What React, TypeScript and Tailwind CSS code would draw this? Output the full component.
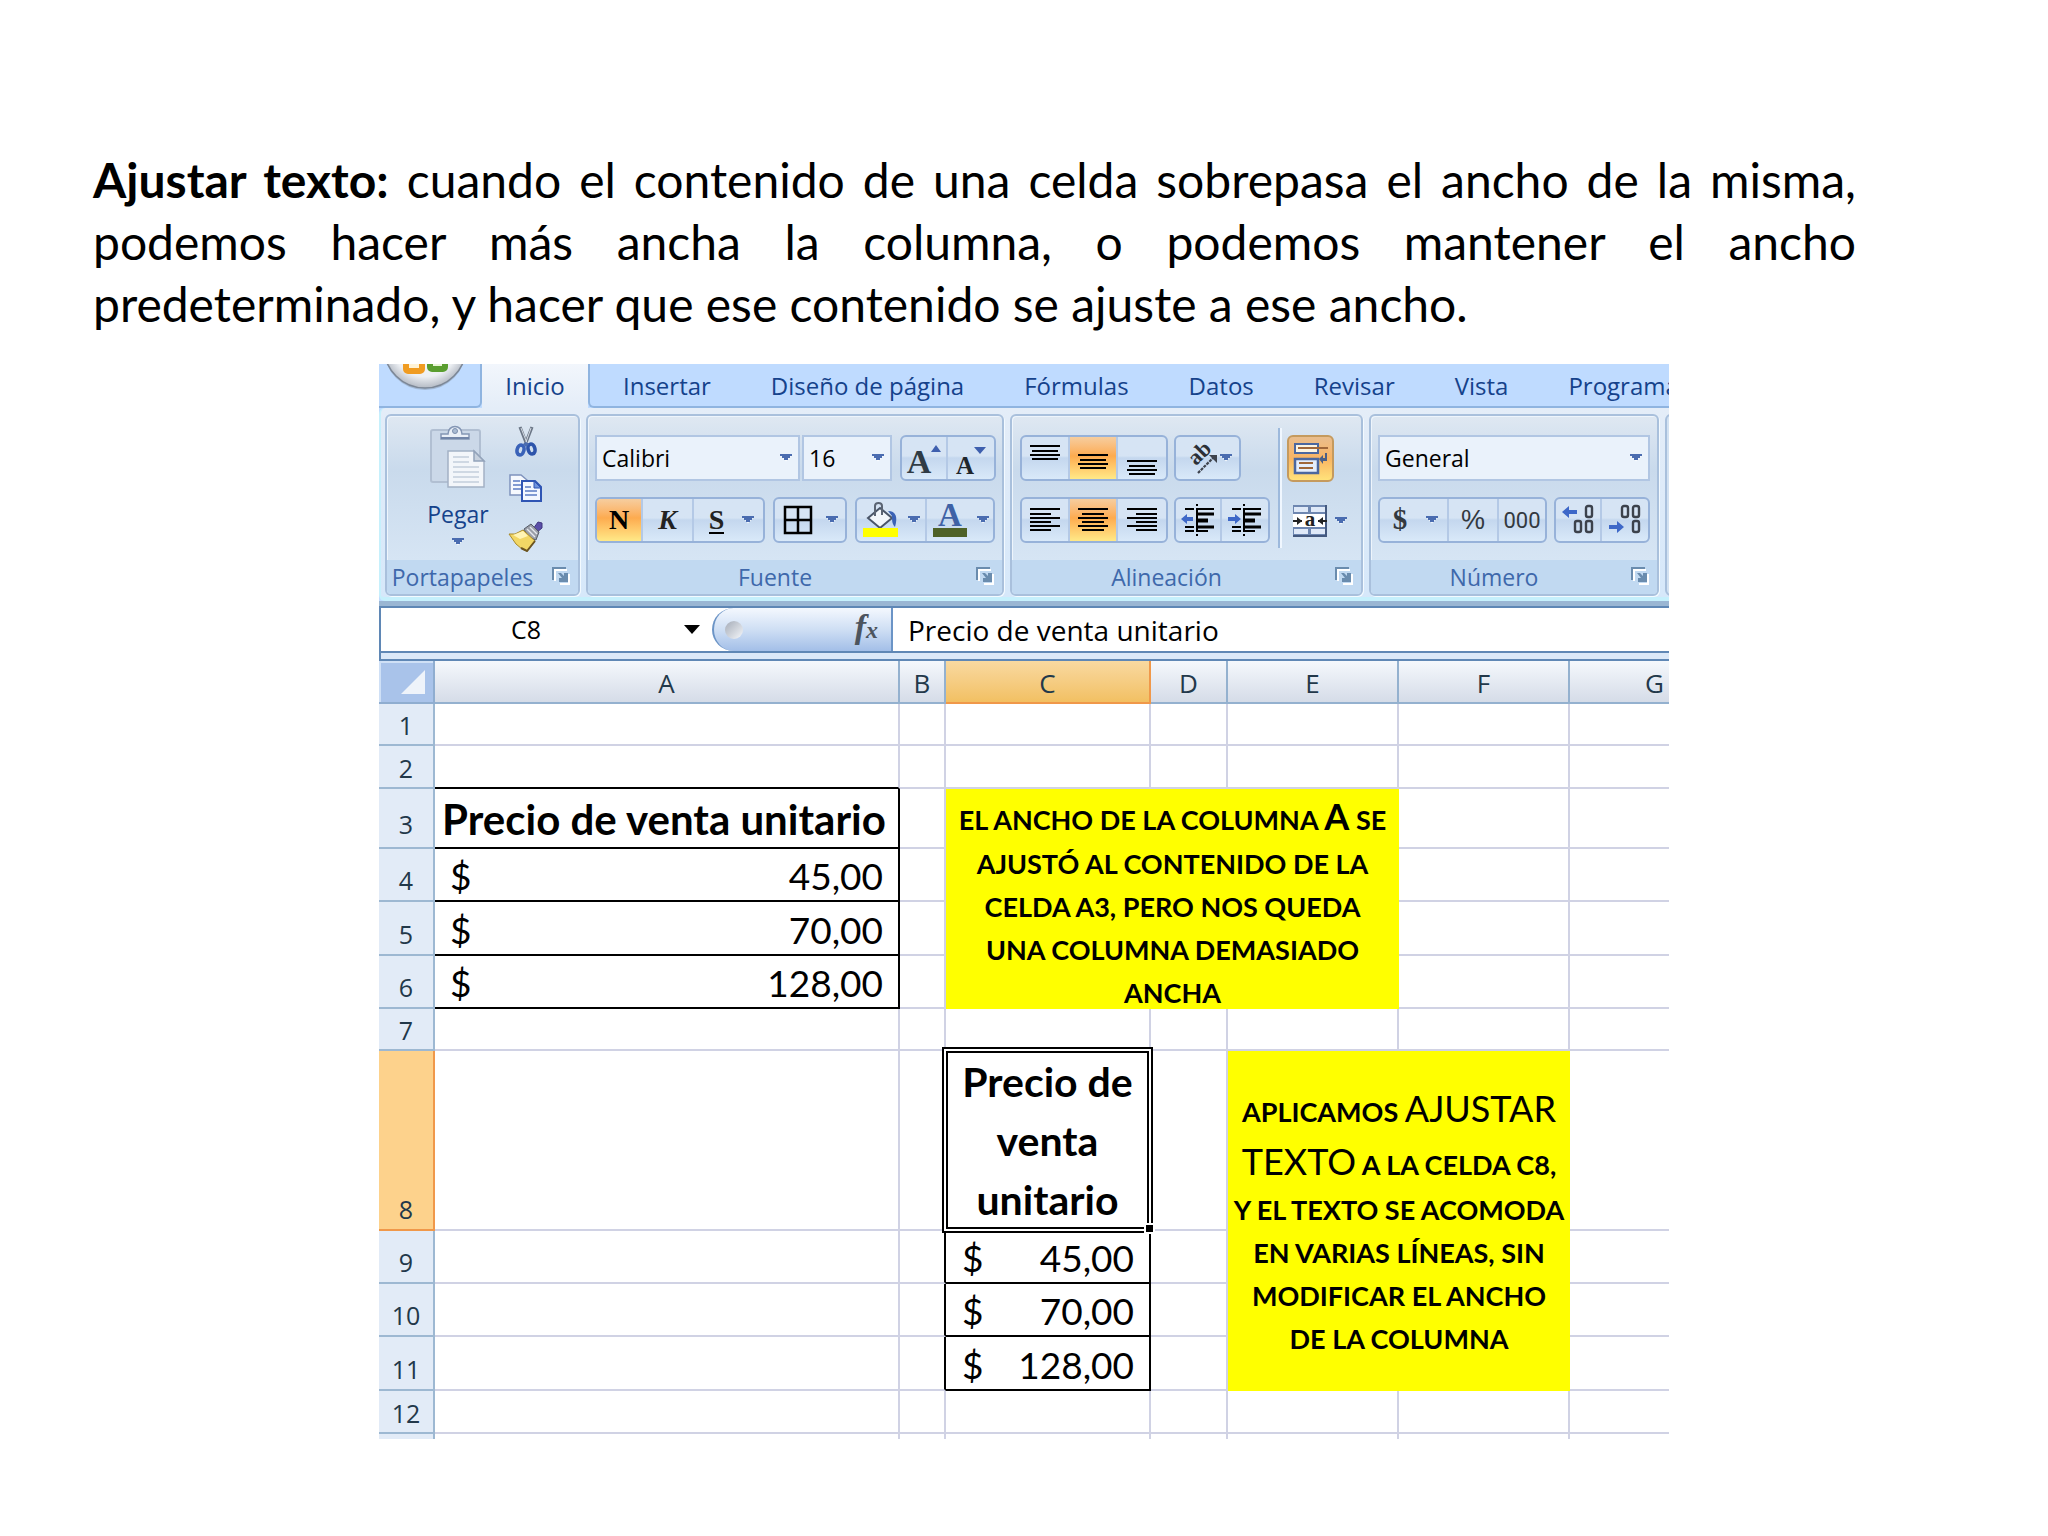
import type { ReactNode } from "react";

const UI = "font-['Open_Sans','Noto_Sans',sans-serif]";
const CALC = "font-['Lato','Open_Sans',sans-serif]";

function Caret({ className = "" }: { className?: string }) {
  return (
    <svg className={className} width="12" height="8" viewBox="0 0 12 8" aria-hidden="true">
      <path d="M1 2.2h10L6 7.6z" fill="#fff" opacity=".8" />
      <path d="M0 0h12v2h-2v2H8v2H4V4H2V2H0z" fill="#4a6cb0" />
    </svg>
  );
}

function Launcher({ label }: { label: string }) {
  return (
    <button type="button" aria-label={label} className="absolute right-2 top-[7px]">
      <svg width="18" height="18" viewBox="0 0 18 18" aria-hidden="true">
        <path d="M3 14V3h12" fill="none" stroke="#fff" strokeWidth="2" />
        <path d="M1 13V1h13" fill="none" stroke="#6a8cae" strokeWidth="2" />
        <path d="M8 17h9V7" fill="none" stroke="#fff" strokeWidth="2" />
        <path d="M6 6l3 0 3 3V6h4v9H7v-4h3z" fill="#6a8cae" />
      </svg>
    </button>
  );
}

function Group({ label, width, children }: { label: string; width: string; children: ReactNode }) {
  return (
    <section
      aria-label={label}
      className={`relative flex h-[182px] shrink-0 flex-col overflow-hidden rounded-md border-2 border-[#a9c0dc] bg-linear-to-b from-[#dfe8f2] from-0% via-[#c9daec] via-30% to-[#dbe9f7] shadow-[1px_1px_0_#f3faff,inset_1px_1px_0_#eef5fc] ${width}`}
    >
      <div className="flex-1">{children}</div>
      <div className="relative h-[34px] bg-[#c1d9f1] pr-10 text-center text-[23px] leading-[35px] text-[#3e68ab]">
        {label}
        <Launcher label={`Opciones de ${label}`} />
      </div>
    </section>
  );
}

function Bar({ children }: { children: ReactNode }) {
  return (
    <div className="flex h-[46px] divide-x-2 divide-[#b4c9e6] overflow-hidden rounded-md border-2 border-[#97b2d9] bg-linear-to-b from-[#d6e4f4] from-45% via-[#c4d7ee] via-50% to-[#d9e9f9]">
      {children}
    </div>
  );
}

function Btn({ label, w, active = false, children }: { label: string; w: string; active?: boolean; children: ReactNode }) {
  return (
    <button
      type="button"
      aria-label={label}
      aria-pressed={active}
      className={`flex h-full shrink-0 items-center justify-center ${w} ${
        active ? "bg-linear-to-b from-[#f6cd9e] from-0% via-[#fdab4f] via-45% to-[#ffe987]" : ""
      }`}
    >
      {children}
    </button>
  );
}

function Combo({ label, value, w }: { label: string; value: string; w: string }) {
  return (
    <div className={`relative h-[46px] ${w}`}>
      <select
        aria-label={label}
        defaultValue={value}
        className="h-full w-full appearance-none border-2 border-[#b1c6e3] bg-[#eaf2fb] pl-[5px] text-[23px] leading-[40px] text-black"
      >
        <option>{value}</option>
      </select>
      <Caret className="pointer-events-none absolute right-2 top-[19px]" />
    </div>
  );
}

function Lines({ rows }: { rows: [number, number, number][] }) {
  return (
    <svg width="32" height="36" viewBox="0 0 32 36" aria-hidden="true">
      {rows.map(([x, y, w]) => (
        <rect key={y} x={x} y={y} width={w} height="2" fill="#000" />
      ))}
    </svg>
  );
}

const short = (y: number): [number, number, number][] => [
  [1, y, 30],
  [3, y + 5, 26],
  [1, y + 9, 30],
  [3, y + 13, 26],
];

function ScissorsIcon() {
  return (
    <svg width="22" height="32" viewBox="0 0 22 32" aria-hidden="true">
      <path d="M5 1l7 18M17 1l-7 18" stroke="#6c7787" strokeWidth="3.2" />
      <path d="M6 2l6 15M16 2l-5 14" stroke="#d5dbe3" strokeWidth="1" />
      <ellipse cx="5.500" cy="24" rx="3.400" ry="5" fill="none" stroke="#3a62b8" strokeWidth="3.600" transform="rotate(15 5.500 24)" />
      <ellipse cx="16.500" cy="23" rx="3.400" ry="5" fill="none" stroke="#2d54ab" strokeWidth="3.600" transform="rotate(-15 16.500 23)" />
      <path d="M8 18l3-2 3 2-3 3z" fill="#4a6cb0" />
    </svg>
  );
}

function CopyIcon() {
  return (
    <svg width="34" height="30" viewBox="0 0 34 30" aria-hidden="true">
      <path d="M1 1h11l6 5v15H1z" fill="#f6f9fe" stroke="#7f93bd" strokeWidth="1.500" />
      <path d="M4 7h7M4 11h9M4 15h9" stroke="#5c7cc4" strokeWidth="1.600" />
      <path d="M13 7h13l6 6v14H13z" fill="#f3f7ff" stroke="#2f55b4" strokeWidth="2" />
      <path d="M25 7v7h7z" fill="#6f93dc" stroke="#2f55b4" strokeWidth="1" />
      <path d="M16 13h6M16 17h12M16 21h12" stroke="#5c7cc4" strokeWidth="1.700" />
    </svg>
  );
}

function BrushIcon() {
  return (
    <svg width="36" height="32" viewBox="0 0 36 32" aria-hidden="true">
      <path d="M25 9l5-7 4 1 0 5-6 5z" fill="#5b4fa8" stroke="#41377e" strokeWidth="1" />
      <path d="M16 9l7-5 8 8-3 8-8-3z" fill="#9a9ea8" stroke="#555b66" strokeWidth="1" />
      <path d="M19 9l8 8M22 7l7 7" stroke="#e5e8ee" strokeWidth="1.400" />
      <path d="M1 14l6 0 8-4 12 11-8 10-5-2-6-5z" fill="#f2d765" stroke="#a98a2a" strokeWidth="1" />
      <path d="M5 15l10-4 5 5-8 3z" fill="#fff4b4" />
      <path d="M13 28l6 3 8-10" fill="none" stroke="#6b5420" strokeWidth="2" />
    </svg>
  );
}

function PasteIcon() {
  return (
    <svg width="58" height="64" viewBox="0 0 58 64" aria-hidden="true">
      <rect x="2" y="5" width="49" height="52" rx="2" fill="#cbd8e8" stroke="#b1bfd2" strokeWidth="2" />
      <path d="M12 14v-5h7c0-10 14-10 14 0h7v5z" fill="#e9eff7" stroke="#8496b4" strokeWidth="1.500" />
      <circle cx="26" cy="6" r="2.500" fill="#a9bbd3" stroke="#7c8fae" />
      <path d="M12 13h28" stroke="#7185a8" strokeWidth="2" />
      <path d="M19 26h26l10 10v26H19z" fill="#f3f6fa" stroke="#a3b1c5" strokeWidth="1.500" />
      <path d="M45 26v10h10z" fill="#c7d1de" stroke="#93a3ba" strokeWidth="1.500" />
      <path d="M24 32h16M24 37h16M24 42h26M24 47h26M24 52h26M24 57h26" stroke="#c3cedc" strokeWidth="1.500" />
    </svg>
  );
}

function OrientationIcon() {
  return (
    <svg width="36" height="36" viewBox="0 0 36 36" aria-hidden="true">
      <text x="7" y="26" fontFamily="Liberation Serif" fontWeight="700" fontSize="22" fill="#2c3036" transform="rotate(-45 10 20)">
        ab
      </text>
      <path d="M14 33L31 16" fill="none" stroke="#3e434c" strokeWidth="2.200" strokeDasharray="3 1" />
      <path d="M25 15h8v8z" fill="#3e434c" />
    </svg>
  );
}

function IndentIcon({ back }: { back: boolean }) {
  return (
    <svg width="36" height="34" viewBox="0 0 36 34" aria-hidden="true">
      <path d="M5 6h9M5 24h9M5 28h9M16 6h18" stroke="#000" strokeWidth="2.200" />
      <path d="M16 11h18M16 24h18" stroke="#000" strokeWidth="3" />
      <path d="M16 28h12" stroke="#000" strokeWidth="2" />
      <path d="M16 17.500h12" stroke="#000" strokeWidth="4" />
      <path d="M17 1v2M17 31v2M17 5v24" stroke="#000" strokeWidth="2" />
      {back ? (
        <path d="M1 16l6-5v3h6v4H7v3z" fill="#3e68c8" />
      ) : (
        <path d="M14 16l-6-5v3H1v4h7v3z" fill="#3e68c8" />
      )}
    </svg>
  );
}

function WrapIcon() {
  return (
    <svg width="36" height="34" viewBox="0 0 36 34" aria-hidden="true">
      <rect x="2" y="2" width="23" height="9" fill="#fdf4e0" stroke="#4b679f" strokeWidth="2" />
      <path d="M5 6h30" stroke="#a0673a" strokeWidth="2" />
      <rect x="2" y="17" width="23" height="14" fill="#e5eefc" stroke="#4b679f" strokeWidth="2.500" />
      <path d="M6 21h14M6 26h14" stroke="#a0673a" strokeWidth="2" />
      <path d="M34 11v8h-4v3l-4-5 4-4v3h2v-5z" fill="#4b5f86" />
    </svg>
  );
}

function MergeIcon() {
  return (
    <svg width="34" height="32" viewBox="0 0 34 32" aria-hidden="true">
      <rect width="34" height="32" fill="#6d86b0" />
      <path d="M1 2h14v5H1zM18 2h14v5H18zM1 24h14v5H1zM18 24h14v5H18z" fill="#dfe9f8" />
      <rect x="0" y="9" width="33" height="13" fill="#fff" />
      <path d="M33 0v32M0 31h34" stroke="#44597f" strokeWidth="2" />
      <text x="17" y="21" textAnchor="middle" fontFamily="Liberation Serif" fontWeight="700" fontSize="21" fill="#222">
        a
      </text>
      <path d="M0 16h9M25 16h9" stroke="#222" strokeWidth="2" />
      <path d="M4 12l5 4-5 4zM30 12l-5 4 5 4z" fill="#222" />
    </svg>
  );
}

function FillIcon() {
  return (
    <svg width="38" height="36" viewBox="0 0 38 36" aria-hidden="true">
      <path d="M6 16L18 6l12 10-12 10z" fill="#f2f6fb" stroke="#4a5568" strokeWidth="2" />
      <path d="M13 14V4c0-4 7-4 7 0v9" fill="none" stroke="#5b6473" strokeWidth="2" />
      <path d="M26 9c8 0 10 6 7 16-3-3-3-7-3-11z" fill="#3b62b4" />
      <rect x="1" y="26" width="35" height="9" fill="#ffff00" />
    </svg>
  );
}

function FontColorIcon() {
  return (
    <svg width="36" height="36" viewBox="0 0 36 36" aria-hidden="true">
      <text x="18" y="24" textAnchor="middle" fontFamily="Liberation Serif" fontWeight="700" fontSize="33" fill="#3f62a6">
        A
      </text>
      <rect x="1" y="26" width="34" height="9" fill="#4f6228" />
    </svg>
  );
}

function DecimalIcon({ more }: { more: boolean }) {
  return (
    <svg width="36" height="32" viewBox="0 0 36 32" aria-hidden="true">
      <g fill="none" stroke="#3c424c" strokeWidth="2.400">
        <rect x="26" y="2" width="6" height="11" rx="2" />
        <rect x="26" y="17" width="6" height="11" rx="2" />
        {more ? <rect x="15" y="17" width="6" height="11" rx="2" /> : <rect x="15" y="2" width="6" height="11" rx="2" />}
      </g>
      {more ? (
        <path d="M2 8l7-6v4h8v4H9v4z" fill="#3e68c8" />
      ) : (
        <path d="M17 23l-7-6v4H2v4h8v4z" fill="#3e68c8" />
      )}
    </svg>
  );
}

function OfficeButton() {
  return (
    <button type="button" aria-label="Botón de Office" className="h-[44px] w-[103px] shrink-0 rounded-br-md border-b-2 border-r-2 border-[#8fb4e0] bg-[#bfdbff]">
      <svg width="95" height="42" viewBox="0 0 95 42" aria-hidden="true">
        <defs>
          <radialGradient id="orb" cx=".5" cy=".45" r=".55">
            <stop offset="0" stopColor="#ffffff" />
            <stop offset=".75" stopColor="#eceff3" />
            <stop offset="1" stopColor="#b4bac4" />
          </radialGradient>
        </defs>
        <circle cx="46" cy="-15" r="41" fill="#8797ac" opacity=".5" />
        <circle cx="46" cy="-17" r="41" fill="url(#orb)" stroke="#7c8796" strokeWidth="1.500" />
        <rect x="27" y="-9" width="16" height="16" rx="2" fill="#fff3d6" stroke="#f09c22" strokeWidth="6" />
        <rect x="51" y="-11" width="15" height="16" rx="2" fill="#e9f5d6" stroke="#5a9e2f" strokeWidth="6" />
      </svg>
    </button>
  );
}

const tabs = ["Insertar", "Diseño de página", "Fórmulas", "Datos", "Revisar", "Vista", "Programador"];

function Ribbon() {
  return (
    <div className={`${UI} bg-[#bfdbff]`}>
      <div role="tablist" className="flex h-[44px] text-[24px] leading-[40px] text-[#15428b]">
        <OfficeButton />
        <button
          type="button"
          role="tab"
          aria-selected="true"
          className="w-[106px] shrink-0 bg-linear-to-b from-[#f2f6fc] to-[#e4edf8]"
        >
          Inicio
        </button>
        <div className="flex flex-1 overflow-hidden rounded-bl-md border-b-2 border-l-2 border-[#8fb4e0]">
          {tabs.map((t) => (
            <button key={t} type="button" role="tab" aria-selected="false" className="shrink-0 px-[30px] pt-[2px] first:pl-[33px]">
              {t}
            </button>
          ))}
        </div>
      </div>

      <div className="flex h-[193px] gap-[6px] overflow-hidden rounded-l-md border-b-4 border-l-2 border-[#c6f0fc] bg-linear-to-b from-[#e4edf8] to-[#d6e8fa] pl-[4px] pt-[6px]">
        <Group label="Portapapeles" width="w-[195px]">
          <div className="flex h-full pl-[31px] pt-[9px]">
            <button type="button" className="flex w-[80px] flex-col items-center text-[23px] leading-[30px] text-[#15428b]">
              <PasteIcon />
              <span className="mt-[10px]">Pegar</span>
              <Caret className="mt-[9px]" />
            </button>
            <div className="ml-[10px] flex flex-col items-center gap-[16px] pt-px">
              <button type="button" aria-label="Cortar"><ScissorsIcon /></button>
              <button type="button" aria-label="Copiar"><CopyIcon /></button>
              <button type="button" aria-label="Copiar formato"><BrushIcon /></button>
            </div>
          </div>
        </Group>

        <Group label="Fuente" width="w-[418px]">
          <div className="flex flex-col gap-[16px] pl-[7px] pt-[19px]">
            <div className="flex">
              <Combo label="Fuente" value="Calibri" w="w-[205px]" />
              <Combo label="Tamaño de fuente" value="16" w="ml-[2px] w-[90px]" />
              <div className="ml-[8px]">
                <Bar>
                  <Btn label="Aumentar tamaño" w="w-[46px]">
                    <span className="pt-2 font-['Liberation_Serif',serif] text-[34px] font-bold leading-[36px] text-[#2f3b45]">A</span>
                    <svg className="mb-5" width="10" height="7" aria-hidden="true"><path d="M0 7h10L5 0z" fill="#3e5fae" /></svg>
                  </Btn>
                  <Btn label="Disminuir tamaño" w="w-[46px]">
                    <span className="pt-4 font-['Liberation_Serif',serif] text-[25px] font-bold leading-[26px] text-[#1f262c]">A</span>
                    <svg className="mb-4" width="12" height="7" aria-hidden="true"><path d="M0 0h12L6 7z" fill="#3e5fae" /></svg>
                  </Btn>
                </Bar>
              </div>
            </div>
            <div className="flex gap-[8px]">
              <Bar>
                <Btn label="Negrita" w="w-[46px]" active>
                  <span className="font-['Liberation_Serif',serif] text-[28px] font-bold">N</span>
                </Btn>
                <Btn label="Cursiva" w="w-[51px]">
                  <span className="font-['Liberation_Serif',serif] text-[28px] font-bold italic text-[#222]">K</span>
                </Btn>
                <Btn label="Subrayado" w="w-[69px]">
                  <span className="ml-[6px] mr-[18px] border-b-2 border-black font-['Liberation_Serif',serif] text-[28px] font-bold leading-[25px] text-[#222]">S</span>
                  <Caret />
                </Btn>
              </Bar>
              <Bar>
                <Btn label="Bordes" w="w-[70px]">
                  <svg className="mr-[13px]" width="30" height="30" viewBox="0 0 30 30" aria-hidden="true">
                    <path d="M2 2h26v26H2zM15 2v26M2 15h26" fill="none" stroke="#000" strokeWidth="2.500" />
                  </svg>
                  <Caret />
                </Btn>
              </Bar>
              <Bar>
                <Btn label="Color de relleno" w="w-[70px]">
                  <span className="mr-[8px]"><FillIcon /></span>
                  <Caret />
                </Btn>
                <Btn label="Color de fuente" w="w-[66px]">
                  <span className="mr-[9px]"><FontColorIcon /></span>
                  <Caret />
                </Btn>
              </Bar>
            </div>
          </div>
        </Group>

        <Group label="Alineación" width="w-[353px]">
          <div className="flex pl-[8px] pt-[19px]">
            <div className="flex flex-col gap-[16px]">
              <div className="flex gap-[6px]">
                <Bar>
                  <Btn label="Alinear arriba" w="w-[48px]"><Lines rows={short(5)} /></Btn>
                  <Btn label="Alinear al medio" w="w-[48px]" active><Lines rows={short(14)} /></Btn>
                  <Btn label="Alinear abajo" w="w-[48px]"><Lines rows={short(20)} /></Btn>
                </Bar>
                <Bar>
                  <Btn label="Orientación" w="w-[63px]"><OrientationIcon /><Caret /></Btn>
                </Bar>
              </div>
              <div className="flex gap-[6px]">
                <Bar>
                  <Btn label="Alinear a la izquierda" w="w-[48px]">
                    <Lines rows={[[1, 6, 30], [1, 11, 21], [1, 15, 30], [1, 19, 21], [1, 23, 30], [1, 27, 21]]} />
                  </Btn>
                  <Btn label="Centrar" w="w-[48px]" active>
                    <Lines rows={[[1, 6, 30], [5, 11, 22], [1, 15, 30], [5, 19, 22], [1, 23, 30], [5, 27, 22]]} />
                  </Btn>
                  <Btn label="Alinear a la derecha" w="w-[48px]">
                    <Lines rows={[[1, 6, 30], [10, 11, 21], [1, 15, 30], [10, 19, 21], [1, 23, 30], [10, 27, 21]]} />
                  </Btn>
                </Bar>
                <Bar>
                  <Btn label="Disminuir sangría" w="w-[46px]"><IndentIcon back /></Btn>
                  <Btn label="Aumentar sangría" w="w-[46px]"><IndentIcon back={false} /></Btn>
                </Bar>
              </div>
            </div>
            <div className="-mt-[7px] ml-[8px] h-[120px] w-[4px] border-l-2 border-r-2 border-l-[#9db9dc] border-r-[#f0f7ff]" />
            <div className="ml-[5px] flex flex-col gap-[16px]">
              <button
                type="button"
                aria-label="Ajustar texto"
                aria-pressed="true"
                className="flex h-[47px] w-[47px] items-center justify-center rounded-md border-2 border-[#c59a5e] bg-linear-to-b from-[#e9bd8d] via-[#f9b563] to-[#ffe27a]"
              >
                <WrapIcon />
              </button>
              <button type="button" aria-label="Combinar y centrar" className="flex h-[46px] w-[61px] items-center pl-[6px]">
                <MergeIcon />
                <Caret className="ml-[8px]" />
              </button>
            </div>
          </div>
        </Group>

        <Group label="Número" width="w-[290px]">
          <div className="flex flex-col gap-[16px] pl-[7px] pt-[19px]">
            <Combo label="Formato de número" value="General" w="w-[272px]" />
            <div className="flex gap-[7px] text-[#33393f]">
              <Bar>
                <Btn label="Moneda" w="w-[69px]">
                  <span className="mr-[19px] pl-[4px] font-['Liberation_Serif',serif] text-[29px] font-bold">$</span>
                  <Caret />
                </Btn>
                <Btn label="Porcentaje" w="w-[50px]">
                  <span className="font-['Liberation_Sans',sans-serif] text-[27px]">%</span>
                </Btn>
                <Btn label="Millares" w="w-[46px]">
                  <span className="font-['Roboto',sans-serif] text-[22px]">000</span>
                </Btn>
              </Bar>
              <Bar>
                <Btn label="Aumentar decimales" w="w-[46px]"><DecimalIcon more /></Btn>
                <Btn label="Disminuir decimales" w="w-[46px]"><DecimalIcon more={false} /></Btn>
              </Bar>
            </div>
          </div>
        </Group>

        <div className="h-[182px] w-[20px] shrink-0 rounded-l-md border-2 border-[#a9c0dc] bg-[#d3e2f2]" />
      </div>
      <div className="h-[5px] bg-[#9ab6d3]" />
    </div>
  );
}

function FormulaBar() {
  return (
    <div className={`${UI} border-l-2 border-t-2 border-[#5f87b5] text-black`}>
      <div className="flex h-[43px] bg-white">
        <input aria-label="Cuadro de nombres" defaultValue="C8" className="w-[290px] bg-white text-center text-[25px] outline-none" />
        <button type="button" aria-label="Lista de nombres" className="flex w-[41px] items-center justify-center">
          <svg width="16" height="9" aria-hidden="true"><path d="M0 0h16L8 9z" fill="#000" /></svg>
        </button>
        <div className="flex w-[181px] items-center justify-between rounded-l-full border-l-2 border-r-2 border-[#6b94c6] bg-linear-to-b from-[#f4f8fe] via-[#cfdff4] to-[#a3bfe8] pl-[11px] pr-[13px]">
          <span className="h-[18px] w-[18px] rounded-full bg-linear-to-br from-[#a5acb8] to-[#f6f8fb]" />
          <button type="button" aria-label="Insertar función" className="font-['Liberation_Serif',serif] font-bold italic leading-[34px] text-[#4c545e]">
            <span className="text-[34px]">f</span>
            <span className="text-[24px]">x</span>
          </button>
        </div>
        <input
          aria-label="Barra de fórmulas"
          defaultValue="Precio de venta unitario"
          className="min-w-0 flex-1 bg-white pl-[15px] text-[28px] outline-none"
        />
      </div>
      <div className="h-[10px] border-b-2 border-t-2 border-[#5f87b5] bg-[#dbe8f8]" />
    </div>
  );
}

const G = "border-b-2 border-r-2 border-[#d0d2e4] p-0";
const K = "border-b-2 border-r-2 border-black p-0";
const COLS = ["A", "B", "C", "D", "E", "F", "G"];

function Empty({ n = 1, cls = G }: { n?: number; cls?: string }) {
  return (
    <>
      {Array.from({ length: n }, (_, i) => (
        <td key={i} className={cls} />
      ))}
    </>
  );
}

function RowHead({ n, h, pb = "pb-[5px]", active = false }: { n: number; h: string; pb?: string; active?: boolean }) {
  return (
    <th
      scope="row"
      className={`${UI} border-b-2 border-r-2 p-0 align-bottom text-[25px] font-normal leading-[30px] text-[#22384a] ${h} ${pb} ${
        active ? "border-[#f0984a] bg-[#fdd28c]" : "border-[#9db8d2] bg-[#e2ebf7]"
      }`}
    >
      {n}
    </th>
  );
}

function Money({ value, pad }: { value: string; pad: string }) {
  return (
    <td className={`${K} align-bottom`}>
      <div className={`flex justify-between pb-[2px] text-[37px] leading-[44px] ${pad}`}>
        <span>$</span>
        <span>{value}</span>
      </div>
    </td>
  );
}

const G_RBLACK = "border-b-2 border-r-2 border-b-[#d0d2e4] border-r-black p-0";
const G_BBLACK = "border-b-2 border-r-2 border-b-black border-r-[#d0d2e4] p-0";

function Sheet() {
  return (
    <table className={`${CALC} w-[1362px] table-fixed border-separate border-spacing-0 bg-white text-black`}>
      <colgroup>
        <col className="w-[56px]" />
        <col className="w-[465px]" />
        <col className="w-[46px]" />
        <col className="w-[205px]" />
        <col className="w-[77px]" />
        <col className="w-[171px]" />
        <col className="w-[171px]" />
        <col className="w-[171px]" />
      </colgroup>
      <thead>
        <tr>
          <th className="h-[43px] border-b-2 border-r-2 border-[#8fadd0] bg-[#a9c3ea] p-0 shadow-[inset_2px_2px_0_#cfe0f6]">
            <button type="button" aria-label="Seleccionar todo" className="flex w-full justify-end pr-[8px]">
              <svg width="24" height="24" aria-hidden="true"><path d="M24 0v24H0z" fill="#eef3fa" /></svg>
            </button>
          </th>
          {COLS.map((c) => (
            <th
              key={c}
              scope="col"
              className={`${UI} h-[43px] border-b-2 border-r-2 p-0 pt-[2px] text-[26px] font-normal leading-[30px] text-[#22384a] ${
                c === "C"
                  ? "border-[#f0984a] bg-linear-to-b from-[#f9d9a0] to-[#f2c062]"
                  : "border-[#94b1cf] bg-linear-to-b from-[#f5f8fc] to-[#d5dce8]"
              }`}
            >
              {c}
            </th>
          ))}
        </tr>
      </thead>
      <tbody>
        <tr><RowHead n={1} h="h-[42px]" pb="pb-[4px]" /><Empty n={7} /></tr>
        <tr><RowHead n={2} h="h-[43px]" pb="pb-[4px]" /><Empty cls={G_BBLACK} /><Empty n={6} /></tr>
        <tr>
          <RowHead n={3} h="h-[60px]" pb="pb-[8px]" />
          <td className={`${K} whitespace-nowrap pr-[5px] text-center align-bottom text-[42px] font-bold leading-[56px]`}>Precio de venta unitario</td>
          <Empty />
          <td colSpan={3} rowSpan={4} className="bg-[#ffff00] p-0 align-bottom text-center text-[27px] font-bold leading-[43px]">
            <div className="h-[212px] whitespace-nowrap">
              <p className="h-[45px] leading-[45px]">
                EL ANCHO DE LA COLUMNA <span className="text-[36px] leading-none">A</span> SE
              </p>
              <p>AJUSTÓ AL CONTENIDO DE LA</p>
              <p>CELDA A3, PERO NOS QUEDA</p>
              <p>UNA COLUMNA DEMASIADO</p>
              <p>ANCHA</p>
            </div>
          </td>
          <Empty n={2} />
        </tr>
        <tr><RowHead n={4} h="h-[53px]" /><Money value="45,00" pad="pl-[15px] pr-[15px]" /><Empty n={3} /></tr>
        <tr><RowHead n={5} h="h-[54px]" /><Money value="70,00" pad="pl-[15px] pr-[15px]" /><Empty n={3} /></tr>
        <tr><RowHead n={6} h="h-[53px]" /><Money value="128,00" pad="pl-[15px] pr-[15px]" /><Empty n={3} /></tr>
        <tr><RowHead n={7} h="h-[42px]" pb="pb-[4px]" /><Empty n={7} /></tr>
        <tr>
          <RowHead n={8} h="h-[180px]" active />
          <Empty n={2} />
          <td className={`${K} relative text-center align-bottom text-[41px] font-bold leading-[59px]`}>
            <p>Precio de</p>
            <p>venta</p>
            <p>unitario</p>
            <span className="absolute -bottom-[4px] -left-[4px] -right-[4px] -top-[4px] border-2 border-black">
              <span className="block h-full w-full border-2 border-white">
                <span className="block h-full w-full border-2 border-black" />
              </span>
            </span>
            <span className="absolute -bottom-[5px] -right-[6px] h-[11px] w-[11px] border-2 border-white bg-black" />
          </td>
          <Empty />
          <td colSpan={2} rowSpan={4} className="whitespace-nowrap bg-[#ffff00] p-0 pt-[2px] text-center text-[27px] font-bold leading-[43px]">
            <p className="h-[53px] leading-[53px]">APLICAMOS <span className="text-[36px] font-normal leading-none">AJUSTAR</span></p>
            <p className="h-[50px] leading-[53px]"><span className="text-[36px] font-normal leading-none">TEXTO</span> A LA CELDA C8,</p>
            <p>Y EL TEXTO SE ACOMODA</p>
            <p>EN VARIAS LÍNEAS, SIN</p>
            <p>MODIFICAR EL ANCHO</p>
            <p>DE LA COLUMNA</p>
          </td>
          <Empty />
        </tr>
        <tr><RowHead n={9} h="h-[53px]" /><Empty /><Empty cls={G_RBLACK} /><Money value="45,00" pad="pl-[16px] pr-[15px]" /><Empty n={2} /></tr>
        <tr><RowHead n={10} h="h-[53px]" /><Empty /><Empty cls={G_RBLACK} /><Money value="70,00" pad="pl-[16px] pr-[15px]" /><Empty n={2} /></tr>
        <tr><RowHead n={11} h="h-[54px]" /><Empty /><Empty cls={G_RBLACK} /><Money value="128,00" pad="pl-[16px] pr-[15px]" /><Empty n={2} /></tr>
        <tr><RowHead n={12} h="h-[43px]" pb="pb-[4px]" /><Empty n={7} /></tr>
        <tr><td className="h-[5px] border-r-2 border-[#9db8d2] bg-[#e2ebf7] p-0" /><Empty n={7} cls="border-r-2 border-[#d0d2e4] p-0" /></tr>
      </tbody>
    </table>
  );
}

export default function App() {
  return (
    <main className="min-h-screen bg-white pt-[149px] text-black">
      <p className={`${CALC} pl-[93px] pr-[192px] text-justify text-[48px] leading-[62px]`}>
        <b>Ajustar texto:</b> cuando el contenido de una celda sobrepasa el ancho de la misma, podemos hacer más ancha la
        columna, o podemos mantener el ancho predeterminado, y hacer que ese contenido se ajuste a ese ancho.
      </p>
      <div className="mx-auto mt-[29px] w-full max-w-[1290px] overflow-hidden">
        <Ribbon />
        <FormulaBar />
        <Sheet />
      </div>
    </main>
  );
}
